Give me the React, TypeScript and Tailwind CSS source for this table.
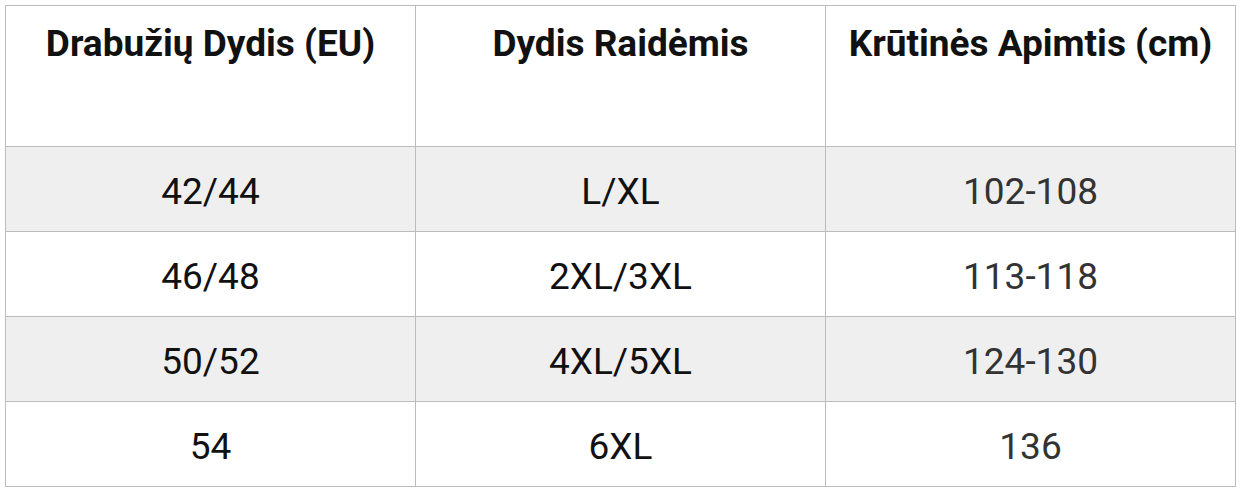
const rows = [
  ["42/44", "L/XL", "102-108"],
  ["46/48", "2XL/3XL", "113-118"],
  ["50/52", "4XL/5XL", "124-130"],
  ["54", "6XL", "136"],
];

export default function App() {
  return (
    <div className="w-[1240px] h-[492px] bg-white pt-[5px] pl-[5px]" style={{ fontFamily: "Roboto, 'Liberation Sans', sans-serif" }}>
      <table className="border-collapse table-fixed w-[1230px]">
        <thead>
          <tr className="h-[141px]">
            {["Drabužių Dydis (EU)", "Dydis Raidėmis", "Krūtinės Apimtis (cm)"].map((h) => (
              <th
                key={h}
                className="w-[410px] border border-[#bcbcbc] align-top pt-[14px] text-[37px] font-bold text-[#111] leading-[48px]"
              >
                {h}
              </th>
            ))}
          </tr>
        </thead>
        <tbody>
          {rows.map((r, i) => (
            <tr key={i} className={`h-[85px] ${i % 2 === 0 ? "bg-[#efefef]" : "bg-white"}`}>
              <td className="border border-[#bcbcbc] text-center text-[37px] text-[#111] pt-[5px]">{r[0]}</td>
              <td className="border border-[#bcbcbc] text-center text-[37px] text-[#111] pt-[5px]">{r[1]}</td>
              <td className="border border-[#bcbcbc] text-center text-[37px] text-[#333] pt-[5px]">{r[2]}</td>
            </tr>
          ))}
        </tbody>
      </table>
    </div>
  );
}
